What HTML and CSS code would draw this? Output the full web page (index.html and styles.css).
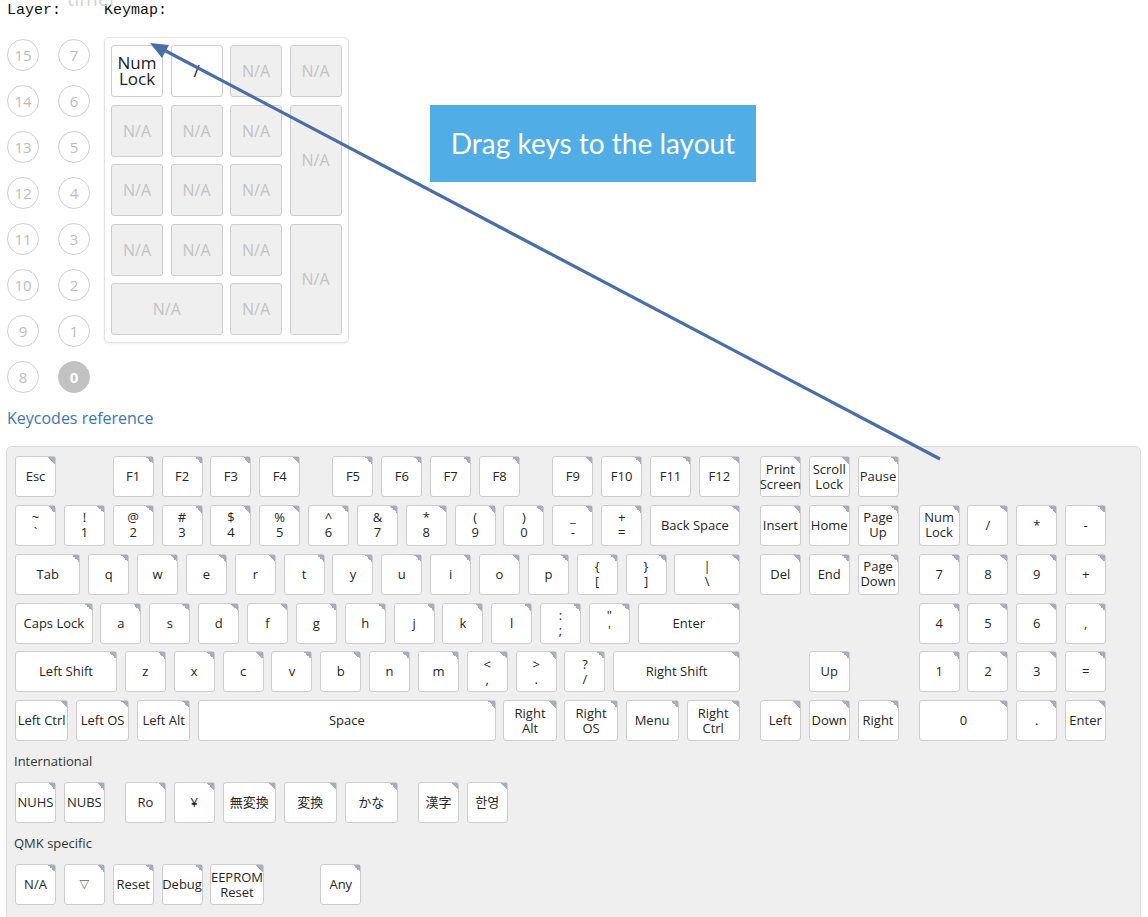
FILE: index.html
```html
<!DOCTYPE html>
<html>
<head>
<meta charset="utf-8">
<link rel="stylesheet" href="styles.css">
</head>
<body>
<span class="ghost">timer</span>
<div class="top">
  <div class="layer-col">
    <div class="mono">Layer:</div>
    <div class="layers">
      <div class="layer">15</div><div class="layer">7</div>
      <div class="layer">14</div><div class="layer">6</div>
      <div class="layer">13</div><div class="layer">5</div>
      <div class="layer">12</div><div class="layer">4</div>
      <div class="layer">11</div><div class="layer">3</div>
      <div class="layer">10</div><div class="layer">2</div>
      <div class="layer">9</div><div class="layer">1</div>
      <div class="layer">8</div><div class="layer active">0</div>
    </div>
  </div>
  <div class="keymap-col">
    <div class="mono">Keymap:</div>
    <div class="keymap-panel">
      <div class="mk set">Num<br>Lock</div>
      <div class="mk set">/</div>
      <div class="mk">N/A</div>
      <div class="mk">N/A</div>
      <div class="mk">N/A</div>
      <div class="mk">N/A</div>
      <div class="mk">N/A</div>
      <div class="mk tall">N/A</div>
      <div class="mk">N/A</div>
      <div class="mk">N/A</div>
      <div class="mk">N/A</div>
      <div class="mk">N/A</div>
      <div class="mk">N/A</div>
      <div class="mk">N/A</div>
      <div class="mk tall">N/A</div>
      <div class="mk wide">N/A</div>
      <div class="mk">N/A</div>
    </div>
  </div>
</div>

<a class="kc-ref">Keycodes reference</a>

<div class="keyboard">
  <div class="row">
    <div class="key">Esc</div><div class="sp s1"></div>
    <div class="key">F1</div><div class="key">F2</div><div class="key">F3</div><div class="key">F4</div><div class="sp s05"></div>
    <div class="key">F5</div><div class="key">F6</div><div class="key">F7</div><div class="key">F8</div><div class="sp s05"></div>
    <div class="key">F9</div><div class="key">F10</div><div class="key">F11</div><div class="key">F12</div><div class="sp s025"></div>
    <div class="key">Print<br>Screen</div><div class="key">Scroll<br>Lock</div><div class="key">Pause</div>
  </div>
  <div class="row">
    <div class="key">~<br>`</div><div class="key">!<br>1</div><div class="key">@<br>2</div><div class="key">#<br>3</div><div class="key">$<br>4</div><div class="key">%<br>5</div><div class="key">^<br>6</div><div class="key">&amp;<br>7</div><div class="key">*<br>8</div><div class="key">(<br>9</div><div class="key">)<br>0</div><div class="key">_<br>-</div><div class="key">+<br>=</div><div class="key w2">Back Space</div><div class="sp s025"></div>
    <div class="key">Insert</div><div class="key">Home</div><div class="key">Page<br>Up</div><div class="sp s025"></div>
    <div class="key">Num<br>Lock</div><div class="key">/</div><div class="key">*</div><div class="key">-</div>
  </div>
  <div class="row">
    <div class="key w15">Tab</div><div class="key">q</div><div class="key">w</div><div class="key">e</div><div class="key">r</div><div class="key">t</div><div class="key">y</div><div class="key">u</div><div class="key">i</div><div class="key">o</div><div class="key">p</div><div class="key">{<br>[</div><div class="key">}<br>]</div><div class="key w15">|<br>\</div><div class="sp s025"></div>
    <div class="key">Del</div><div class="key">End</div><div class="key">Page<br>Down</div><div class="sp s025"></div>
    <div class="key">7</div><div class="key">8</div><div class="key">9</div><div class="key">+</div>
  </div>
  <div class="row">
    <div class="key w175">Caps Lock</div><div class="key">a</div><div class="key">s</div><div class="key">d</div><div class="key">f</div><div class="key">g</div><div class="key">h</div><div class="key">j</div><div class="key">k</div><div class="key">l</div><div class="key">:<br>;</div><div class="key">&quot;<br>'</div><div class="key w225">Enter</div><div class="sp s35"></div>
    <div class="key">4</div><div class="key">5</div><div class="key">6</div><div class="key">,</div>
  </div>
  <div class="row">
    <div class="key w225">Left Shift</div><div class="key">z</div><div class="key">x</div><div class="key">c</div><div class="key">v</div><div class="key">b</div><div class="key">n</div><div class="key">m</div><div class="key">&lt;<br>,</div><div class="key">&gt;<br>.</div><div class="key">?<br>/</div><div class="key w275">Right Shift</div><div class="sp s125"></div>
    <div class="key">Up</div><div class="sp s125"></div>
    <div class="key">1</div><div class="key">2</div><div class="key">3</div><div class="key">=</div>
  </div>
  <div class="row">
    <div class="key w125">Left Ctrl</div><div class="key w125">Left OS</div><div class="key w125">Left Alt</div><div class="key w625">Space</div><div class="key w125">Right<br>Alt</div><div class="key w125">Right<br>OS</div><div class="key w125">Menu</div><div class="key w125">Right<br>Ctrl</div><div class="sp s025"></div>
    <div class="key">Left</div><div class="key">Down</div><div class="key">Right</div><div class="sp s025"></div>
    <div class="key w2">0</div><div class="key">.</div><div class="key">Enter</div>
  </div>

  <div class="section-label">International</div>
  <div class="row">
    <div class="key">NUHS</div><div class="key">NUBS</div><div class="sp s025"></div>
    <div class="key">Ro</div><div class="key">¥</div><div class="key w125">無変換</div><div class="key w125">変換</div><div class="key w125">かな</div><div class="sp s025"></div>
    <div class="key">漢字</div><div class="key kr">한영</div>
  </div>

  <div class="section-label">QMK specific</div>
  <div class="row">
    <div class="key">N/A</div><div class="key small">▽</div><div class="key">Reset</div><div class="key">Debug</div><div class="key w125">EEPROM<br>Reset</div><div class="sp s1"></div>
    <div class="key">Any</div>
  </div>
</div>

<div class="tooltip">Drag keys to the layout</div>

<svg class="arrow" width="1148" height="917" viewBox="0 0 1148 917">
  <line x1="940" y1="459" x2="162" y2="49" stroke="#4a6ea7" stroke-width="3.2" stroke-linecap="butt"/>
  <polygon points="150,43 169,45 162,58" fill="#4a6ea7"/>
</svg>
</body>
</html>
```

FILE: styles.css
```css
html, body {
  margin: 0;
  padding: 0;
}
body {
  font-family: "Open Sans", "Noto Sans", sans-serif;
  color: #333;
  background: #fff;
  position: relative;
  width: 1148px;
  height: 917px;
  overflow: hidden;
}

.ghost {
  position: absolute;
  left: 67px;
  top: -15px;
  font-size: 20px;
  color: #d4d4d4;
}

.top {
  display: flex;
}

.layer-col {
  padding-left: 7px;
  width: 90px;
  margin-right: 7px;
}

.mono {
  font-family: "Liberation Mono", "Courier New", monospace;
  font-size: 15px;
  line-height: 18px;
  padding-top: 2px;
  color: #111;
  white-space: nowrap;
}

.layers {
  display: grid;
  grid-template-columns: 32px 32px;
  column-gap: 19px;
  row-gap: 14px;
  margin-top: 19px;
}

.layer {
  width: 32px;
  height: 32px;
  box-sizing: border-box;
  border: 1px solid #cfcfcf;
  border-radius: 50%;
  display: flex;
  align-items: center;
  justify-content: center;
  font-size: 15px;
  color: #bdbdbd;
}

.layer.active {
  background: #c2c2c2;
  border-color: #c2c2c2;
  color: #fff;
  font-weight: 700;
}

.keymap-panel {
  margin-top: 17px;
  border: 1px solid #e2e2e2;
  border-radius: 5px;
  box-shadow: 0 1px 2px rgba(0, 0, 0, 0.08);
  padding: 7px 6.5px 7px 6px;
  display: grid;
  grid-template-columns: repeat(4, 52px);
  grid-template-rows: repeat(5, 52px);
  gap: 7.5px;
  width: max-content;
}

.mk {
  box-sizing: border-box;
  background: #efefef;
  border: 1px solid #cdcdcd;
  border-radius: 3px;
  display: flex;
  align-items: center;
  justify-content: center;
  text-align: center;
  font-size: 16px;
  color: #c3c3c3;
  line-height: 16px;
}

.mk.set {
  background: #fff;
  color: #222;
  font-size: 17px;
}

.mk.tall {
  grid-row: span 2;
}

.mk.wide {
  grid-column: span 2;
}

.kc-ref {
  display: block;
  margin: 14px 0 0 7px;
  font-size: 16px;
  line-height: 22px;
  color: #3f74b0;
  width: max-content;
}

.keyboard {
  margin: 17px 0 0 6px;
  width: 1135px;
  box-sizing: border-box;
  border: 1px solid #dcdcdc;
  border-radius: 5px;
  background: #efefef;
  padding: 9px 8px 30px 8px;
}

.row {
  display: flex;
  height: 41px;
  margin-bottom: 7.85px;
}

.key {
  flex: none;
  position: relative;
  box-sizing: border-box;
  width: 41px;
  height: 41px;
  margin-right: 7.85px;
  background: #fff;
  border: 1px solid #cdcdcd;
  border-radius: 3px;
  display: flex;
  align-items: center;
  justify-content: center;
  text-align: center;
  font-size: 13px;
  line-height: 15px;
  color: #262626;
  white-space: nowrap;
  font-family: "Open Sans", "Noto Sans CJK JP", sans-serif;
}

.key.kr {
  font-family: "Open Sans", "Noto Sans CJK KR", sans-serif;
}

.key.small {
  font-size: 10px;
}

.key::after {
  content: "";
  position: absolute;
  top: 0;
  right: 0;
  width: 7px;
  height: 7px;
  background: linear-gradient(to bottom left, #a6adbb 50%, transparent 50%);
}

.w125 { width: 53.21px; }
.w15 { width: 65.43px; }
.w175 { width: 77.64px; }
.w2 { width: 89.85px; }
.w225 { width: 102.06px; }
.w275 { width: 126.49px; }
.w625 { width: 297.46px; }

.sp { flex: none; }
.s025 { width: 12.21px; }
.s05 { width: 24.43px; }
.s1 { width: 48.85px; }
.s125 { width: 61.06px; }
.s35 { width: 170.98px; }

.section-label {
  font-size: 13px;
  line-height: 18px;
  margin: 11px 0 12px -1px;
  color: #333;
}

.tooltip {
  position: absolute;
  left: 430px;
  top: 105px;
  width: 326px;
  height: 77px;
  background: #50ade6;
  color: #fff;
  font-family: "Lato", sans-serif;
  font-size: 28px;
  display: flex;
  align-items: center;
  justify-content: center;
  padding-bottom: 2px;
  box-sizing: border-box;
}

.arrow {
  position: absolute;
  left: 0;
  top: 0;
  pointer-events: none;
}
```
